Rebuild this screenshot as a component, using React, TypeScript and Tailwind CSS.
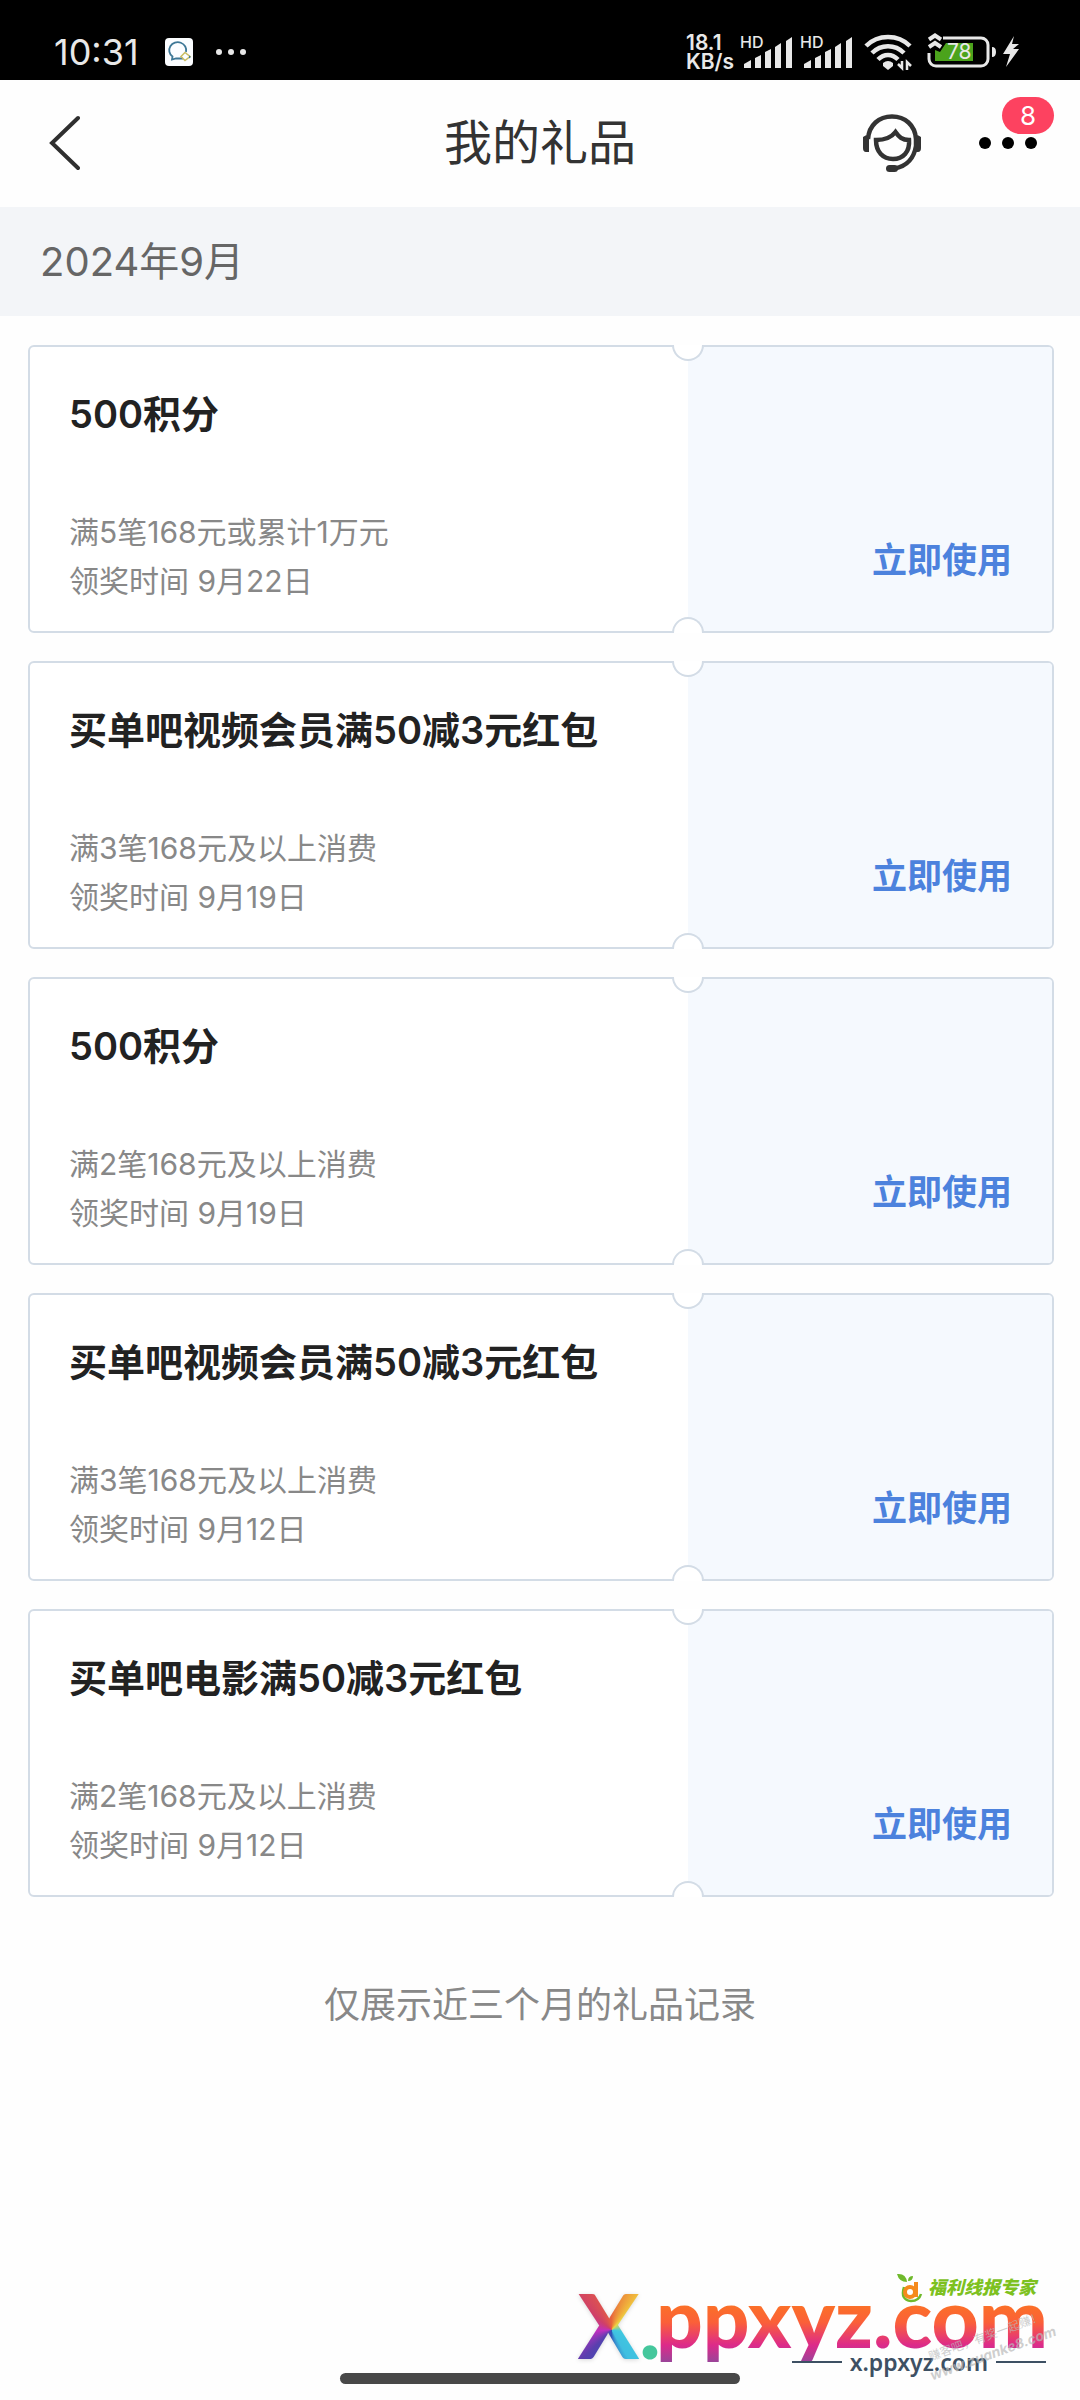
type Gift = {
  title: string;
  rule: string;
  date: string;
};

const gifts: Gift[] = [
  { title: '500积分', rule: '满5笔168元或累计1万元', date: '9月22日' },
  { title: '买单吧视频会员满50减3元红包', rule: '满3笔168元及以上消费', date: '9月19日' },
  { title: '500积分', rule: '满2笔168元及以上消费', date: '9月19日' },
  { title: '买单吧视频会员满50减3元红包', rule: '满3笔168元及以上消费', date: '9月12日' },
  { title: '买单吧电影满50减3元红包', rule: '满2笔168元及以上消费', date: '9月12日' },
];

const Signal = () => (
  <div className="relative h-10 w-[50px]">
    <span className="absolute -left-0.5 top-0.5 text-base leading-4 font-medium">HD</span>
    <svg viewBox="0 0 50 40" className="h-10 w-[50px]" fill="#e8e8e8">
      <path d="M2 36v-4l7-4v8zM13 36V26l6-3v13zM23 36V20l6-3v19zM33 36V15l6-4v25zM44 36V9l6-4v31z" />
    </svg>
  </div>
);

const StatusBar = () => (
  <div className="flex h-20 items-end justify-between bg-black pl-[54px] pr-[60px] pb-2 text-[#e8e8e8]">
    <div className="flex h-10 items-center">
      <span className="text-4xl leading-10">10:31</span>
      <svg viewBox="0 0 28 28" className="ml-[26px] h-7 w-7">
        <rect width="28" height="28" rx="4" fill="#fbfdff" />
        <path d="M18 20.500H11L7 21.500L7.500 18.500A8.500 8 0 1 1 21 14" fill="none" stroke="#3d7796" strokeWidth="1.800" />
        <path d="M20 14.500l5 4-5 4-4-4z" fill="none" stroke="#c9bd62" strokeWidth="1.500" />
        <path d="M24 17.500l2 1.500-2 1.500z" fill="#3d7796" />
      </svg>
      <svg viewBox="0 0 32 8" className="ml-[22px] h-2 w-8" fill="#e8e8e8">
        <circle cx="4" cy="4" r="3" />
        <circle cx="16" cy="4" r="3" />
        <circle cx="28" cy="4" r="3" />
      </svg>
    </div>
    <div className="flex h-10 items-center">
      <div className="w-14 text-[21px] leading-[19px] font-semibold">
        <div>18.1</div>
        <div>KB/s</div>
      </div>
      <Signal />
      <div className="w-[10px]" />
      <Signal />
      <svg viewBox="0 0 48 40" className="ml-3 h-10 w-12">
        <g fill="none" stroke="#e8e8e8" strokeWidth="4.500">
          <path d="M2 14C14 2 34 2 46 14" />
          <path d="M8 21C17 12 31 12 40 21" />
          <path d="M14 27.500C20 21.500 28 21.500 34 27.500" />
        </g>
        <path d="M19 31q5-4 10 0v3l-5 4-5-4z" fill="#e8e8e8" />
        <path d="M34 32l4 4V29M43 38V30l4 4" fill="none" stroke="#e8e8e8" strokeWidth="2.500" />
      </svg>
      <div className="relative ml-3 h-10 w-[74px]">
        <svg viewBox="0 0 74 40" className="h-10 w-[74px]">
          <path d="M11 18L16 20L22 11H49V29H11z" fill="#4ba31c" />
          <path d="M19 6H57a7 7 0 0 1 7 7v14a7 7 0 0 1-7 7H12a7 7 0 0 1-7-7V21" fill="none" stroke="#e8e8e8" strokeWidth="3" />
          <path d="M5 7.500l6-4 6 4M5 15l6-4 6 4" fill="none" stroke="#e8e8e8" strokeWidth="4" />
          <path d="M68 15q4 0 4 5t-4 5z" fill="#e8e8e8" />
        </svg>
        <span className="absolute left-[23px] top-2 text-[21px] leading-6">78</span>
      </div>
      <svg viewBox="0 0 18 40" className="ml-1 h-10 w-[18px]" fill="#e8e8e8">
        <path d="M12 4L1 22H8L4 35L17 17H11L17 12H10z" />
      </svg>
    </div>
  </div>
);

const Header = () => (
  <header className="grid h-[127px] grid-cols-3 items-center px-9 pb-0.5">
    <button type="button" aria-label="返回" className="w-16 pl-1">
      <svg viewBox="0 0 40 60" className="h-[60px] w-10" fill="none" stroke="#2f2f2f" strokeWidth="4" strokeLinecap="round">
        <path d="M38 5L12 30L38 55" />
      </svg>
    </button>
    <h1 className="text-center text-[48px] leading-none text-[#333]">我的礼品</h1>
    <div className="flex items-center justify-end gap-[57px]">
      <button type="button" aria-label="客服">
        <svg viewBox="0 0 58 58" className="h-[58px] w-[58px]" fill="none" stroke="#333" strokeWidth="4.500">
          <path d="M5 25C6 11 16 2.500 29 2.500S52 11 53 25V32C51 44 44 52 32 54.500" />
          <path d="M13 26C21 26 28 24 32.500 18C36 23 39 26 46 26C47 38 40 45 30 45S13 38 13 26z" />
          <path d="M0 23q2-2 6-2v17H3q-3 0-3-4zM58 23q-2-2-6-2v17h3q3 0 3-4z" fill="#333" stroke="none" />
          <rect x="23" y="51" width="12" height="7" rx="3.500" fill="#333" stroke="none" />
        </svg>
      </button>
      <button type="button" aria-label="更多" className="relative mr-1.5">
        <svg viewBox="0 0 60 12" className="h-3 w-[60px]" fill="#000">
          <circle cx="7" cy="6" r="6" />
          <circle cx="30" cy="6" r="6" />
          <circle cx="53" cy="6" r="6" />
        </svg>
        <span className="absolute -top-10 -right-4 h-[37px] w-[52px] rounded-full bg-[#fd4260] text-center text-[26px] leading-[37px] text-white">8</span>
      </button>
    </div>
  </header>
);

const GiftCard = ({ gift }: { gift: Gift }) => (
  <li className="flex h-[288px] rounded-md border-2 border-[#d3dce6] bg-white">
    <div className="flex flex-1 flex-col justify-between px-[39px] pt-[45px] pb-[25px]">
      <h2 className="text-[38px] leading-[44px] font-semibold text-[#222]">{gift.title}</h2>
      <div className="text-[30px] leading-[49px] text-[#888]">
        <p>{gift.rule}</p>
        <p>领奖时间 {gift.date}</p>
      </div>
    </div>
    <div className="relative flex w-[364px] items-end justify-end rounded-r-sm bg-[#f5f9fe] pr-10 pb-[49px]">
      {/* ticket notches */}
      <span className="absolute -top-0.5 -left-4 h-4 w-8 rounded-b-full border-2 border-t-0 border-[#d3dce6] bg-white" />
      <span className="absolute -bottom-0.5 -left-4 h-4 w-8 rounded-t-full border-2 border-b-0 border-[#d3dce6] bg-white" />
      <button type="button" className="text-[35px] leading-[44px] font-semibold text-[#4c82dd]">立即使用</button>
    </div>
  </li>
);

const Watermark = () => (
  <div className="pointer-events-none absolute right-[34px] bottom-0 h-[140px] w-[470px]">
    <div className="absolute left-0.5 top-4 flex font-[Lato] text-[90px] leading-[96px] font-black">
      <span className="bg-[conic-gradient(from_0deg_at_55%_56%,#e8643c,#f0b83c_35deg,#e8d84a_45deg,#3fc9e0_100deg,#3fbfe0_150deg,#2e55b8_180deg,#5a3fae_225deg,#c02fc0_265deg,#cf3f68_310deg,#e8643c)] bg-clip-text text-transparent drop-shadow-sm">X</span>
      <span className="bg-[#45c79c] bg-clip-text text-transparent">.</span>
    </div>
    <div className="absolute -right-0.5 top-1 bg-[linear-gradient(#fb7028_40%,#fb6038_56%,#dd2a8a_78%,#8a4a9c_98%)] bg-clip-text font-[Lato] text-[82px] leading-[104px] font-black text-transparent">
      ppxyz.com
    </div>
    <div className="absolute right-2.5 top-3 flex items-center gap-1 text-lg leading-6 font-black text-[#7dc11f] italic">
      <svg viewBox="0 0 28 32" className="h-8 w-7" fill="none">
        <path d="M1 2Q10 1 11 10Q3 10 1 2zM12 9Q12 4 17 4Q17 9 12 9z" fill="#6fb92c" />
        <path d="M8 15Q4 28 15 29Q23 29 25 22" stroke="#6fb92c" strokeWidth="2.500" />
        <circle cx="14" cy="20" r="5" stroke="#f58a1c" strokeWidth="4" />
        <path d="M20 10V25" stroke="#f58a1c" strokeWidth="4" />
      </svg>
      <span>福利线报专家</span>
    </div>
    <p className="absolute right-0 bottom-6 flex items-center gap-2 font-['Noto_Sans'] text-[23px] leading-7 font-semibold text-[#3d5063]">
      <span className="h-0.5 w-[50px] bg-[#3d5063]" />
      x.ppxyz.com
      <span className="h-0.5 w-[50px] bg-[#3d5063]" />
    </p>
    <div className="absolute -right-2 bottom-9 w-[130px] -rotate-20 text-center leading-4 text-[#b9b9b9]/70">
      <div className="text-xs">赚客吧，有奖一起赚！</div>
      <div className="text-sm font-bold italic">www.zuanke8.com</div>
    </div>
  </div>
);

export default function App() {
  return (
    <div className="relative flex min-h-screen flex-col bg-[#fefefe] font-[Inter,'Noto_Sans_CJK_SC',sans-serif]">
      <StatusBar />
      <Header />
      <main>
        <div className="bg-[#f3f5f8] px-10 py-[30px] text-[40px] leading-[49px] text-[#666]">2024年9月</div>
        <ul className="flex flex-col gap-7 pt-[29px] pr-[26px] pl-7">
          {gifts.map((gift, i) => (
            <GiftCard key={i} gift={gift} />
          ))}
        </ul>
        <p className="pt-[86px] text-center text-4xl leading-[44px] text-[#888]">仅展示近三个月的礼品记录</p>
      </main>
      <div className="mx-auto mt-auto mb-4 h-[11px] w-[400px] rounded-full bg-[#484848]" />
      <Watermark />
    </div>
  );
}
